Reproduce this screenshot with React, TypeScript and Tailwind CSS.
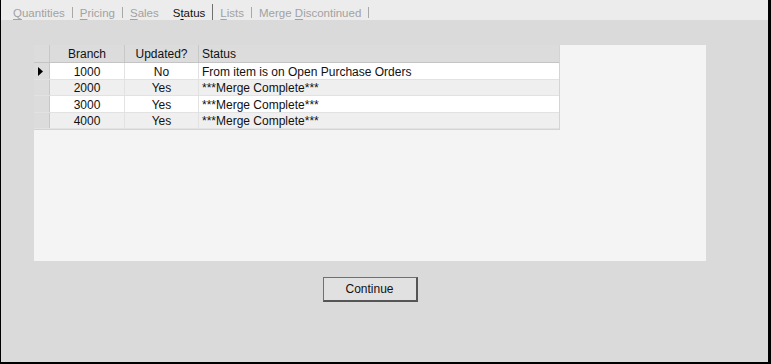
import React from 'react'

const tabs = [
  { pre: '', key: 'Q', post: 'uantities', sep: true },
  { pre: '', key: 'P', post: 'ricing', sep: true },
  { pre: '', key: 'S', post: 'ales', sep: false },
  { pre: 'S', key: 't', post: 'atus', active: true, sep: true },
  { pre: '', key: 'L', post: 'ists', sep: true },
  { pre: 'Merge ', key: 'D', post: 'iscontinued', sep: true },
]

const rows = [
  { branch: '1000', updated: 'No', status: 'From item is on Open Purchase Orders', h: 'h-[17px]' },
  { branch: '2000', updated: 'Yes', status: '***Merge Complete***', h: 'h-[16px]' },
  { branch: '3000', updated: 'Yes', status: '***Merge Complete***', h: 'h-[17px]' },
  { branch: '4000', updated: 'Yes', status: '***Merge Complete***', h: 'h-[16px]' },
]

export default function App() {
  return (
    <div
      className="w-[771px] h-[364px] bg-[#dadada] border-l border-r-[3px] border-b-2 border-black flex flex-col text-[12px] text-[#111]"
      style={{ fontFamily: '"Liberation Sans", Arial, sans-serif' }}
    >
      {/* tab strip */}
      <div className="h-[20px] bg-[#ececec] flex items-end pl-[5px] shrink-0 text-[11.5px]">
        {tabs.map((t, i) => (
          <div key={i} className="flex items-end h-full">
            <span
              className={
                t.active
                  ? 'pl-[6px] pr-[7px] text-[#111] leading-[14px]'
                  : 'px-[7px] text-[#a2a2a2] leading-[14px]'
              }
            >
              {t.pre}
              <span className="underline underline-offset-2">{t.key}</span>
              {t.post}
            </span>
            {t.sep && (
              <div
                className={
                  t.active
                    ? 'w-px h-[16px] bg-[#707070]'
                    : 'w-px h-[11px] bg-[#a8a8a8] mb-[2px]'
                }
              />
            )}
            {!t.sep && <div className="w-px" />}
          </div>
        ))}
      </div>

      {/* body */}
      <div className="flex-1 pl-[33px] pt-[25px]">
        <div className="w-[672px] flex flex-col items-center">
          <div className="w-[672px] h-[216px] bg-[#f4f4f4] flex flex-col">
            <div className="w-[526px] border-r border-b border-[#d4d4d4]">
              {/* header */}
              <div className="flex h-[18px] bg-[#dcdcdc] border-b border-[#c4c4c4]">
                <div className="w-[16px] border-r border-[#c8c8c8]" />
                <div className="w-[75px] border-r border-[#c8c8c8] flex items-center justify-center pt-px">Branch</div>
                <div className="w-[74px] border-r border-[#c8c8c8] flex items-center justify-center pt-px">Updated?</div>
                <div className="flex-1 flex items-center pl-[3px] pt-px">Status</div>
              </div>
              {rows.map((r, i) => (
                <div
                  key={r.branch}
                  className={`flex ${r.h} ${i % 2 === 0 ? 'bg-white' : 'bg-[#efefef]'} border-b border-[#e2e2e2]`}
                >
                  <div className="w-[16px] bg-[#dcdcdc] border-r border-[#c8c8c8] flex items-center pl-[4px]">
                    {i === 0 && (
                      <svg width="5" height="9" viewBox="0 0 5 9">
                        <path d="M0 0 L5 4.5 L0 9 Z" fill="#000" />
                      </svg>
                    )}
                  </div>
                  <div className="w-[75px] border-r border-[#e2e2e2] flex items-center justify-center pt-px">{r.branch}</div>
                  <div className="w-[74px] border-r border-[#e2e2e2] flex items-center justify-center pt-px">{r.updated}</div>
                  <div className="flex-1 flex items-center pl-[3px] pt-px">{r.status}</div>
                </div>
              ))}
            </div>
          </div>

          <button className="mt-[16px] w-[95px] h-[25px] bg-[#e1e1e1] border border-[#707070] border-b-2 border-r-2 border-b-[#555] border-r-[#555] text-[12px] text-[#111]">
            Continue
          </button>
        </div>
      </div>
    </div>
  )
}
